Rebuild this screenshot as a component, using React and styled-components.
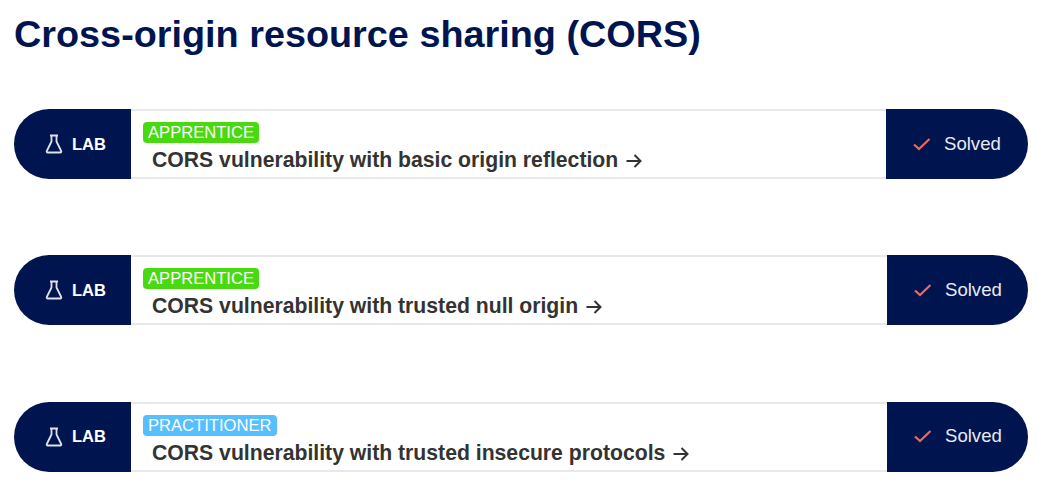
import React from "react";
import styled, { createGlobalStyle } from "styled-components";

const labs = [
  { level: "APPRENTICE", title: "vulnerability with basic origin reflection", statusWidth: 142 },
  { level: "APPRENTICE", title: "vulnerability with trusted null origin", statusWidth: 141 },
  { level: "PRACTITIONER", title: "vulnerability with trusted insecure protocols", statusWidth: 141 },
];

const FlaskIcon = () => (
  <svg width="18" height="20" viewBox="0 0 18 20" fill="none" stroke="#dfe2ea" strokeWidth="1.8">
    <path d="M5 1.5h8M6.5 1.5v6L1.8 17a1 1 0 0 0 .9 1.5h12.6a1 1 0 0 0 .9-1.5L11.5 7.5v-6" strokeLinejoin="round" />
  </svg>
);

const CheckIcon = () => (
  <svg width="18" height="14" viewBox="0 0 18 14" fill="none" stroke="#ef6a5a" strokeWidth="2.2">
    <path d="M1 7.5l5 4.5L16.5 2" />
  </svg>
);

const ArrowIcon = () => (
  <ArrowSvg width="16" height="14" viewBox="0 0 16 14" fill="none" stroke="#333332" strokeWidth="2">
    <path d="M0.5 7h14M8.5 1l6 6-6 6" />
  </ArrowSvg>
);

const App = () => {
  return (
    <Page>
      <GlobalStyle />
      <Heading>Cross-origin resource sharing (CORS)</Heading>
      <List>
        {labs.map((lab) => (
          <Row key={lab.title}>
            <LabTag>
              <FlaskIcon />
              <span>LAB</span>
            </LabTag>
            <Body>
              <Level $level={lab.level}>{lab.level}</Level>
              <Title>
                CORS {lab.title}
                <ArrowIcon />
              </Title>
            </Body>
            <Status $width={lab.statusWidth}>
              <CheckIcon />
              <span>Solved</span>
            </Status>
          </Row>
        ))}
      </List>
    </Page>
  );
};

const GlobalStyle = createGlobalStyle`
  html, body {
    margin: 0;
    background: #fff;
  }
  body {
    font-family: "Liberation Sans", Arial, sans-serif;
  }
`;

const Page = styled.div`
  width: 1038px;
  height: 491px;
  padding: 12px 10px 0 14px;
  box-sizing: border-box;
  overflow: hidden;
`;

const Heading = styled.h1`
  margin: 0;
  font-size: 37.8px;
  line-height: 44px;
  font-weight: 700;
  color: #00144f;
`;

const List = styled.div`
  display: flex;
  flex-direction: column;
  gap: 76.4px;
  margin-top: 53px;
`;

const Row = styled.div`
  display: flex;
  height: 70px;
  box-sizing: border-box;
`;

const LabTag = styled.div`
  width: 117px;
  display: flex;
  align-items: center;
  justify-content: center;
  gap: 9px;
  padding-left: 6px;
  box-sizing: border-box;
  background: #00144f;
  border-radius: 35px 0 0 35px;
  color: #fff;
  font-size: 16.5px;
  font-weight: 700;
`;

const Body = styled.div`
  flex: 1;
  border-top: 2px solid #e6e8eb;
  border-bottom: 2px solid #e6e8eb;
  padding: 11px 0 0 12px;
  box-sizing: border-box;
`;

const Level = styled.span`
  display: inline-block;
  padding: 0 5px;
  height: 21px;
  line-height: 21px;
  border-radius: 4px;
  font-size: 16.6px;
  color: #fff;
  opacity: 0.95;
  background: ${(props) => (props.$level === "PRACTITIONER" ? "#4cbcff" : "#3fd805")};
`;

const Title = styled.div`
  margin: 5px 0 0 9px;
  font-size: 21.2px;
  line-height: 24px;
  font-weight: 700;
  color: #333332;
`;

const ArrowSvg = styled.svg`
  margin-left: 8px;
  vertical-align: -1px;
`;

const Status = styled.div`
  width: ${(props) => props.$width}px;
  display: flex;
  align-items: center;
  gap: 13px;
  padding-left: 27px;
  padding-bottom: 1px;
  box-sizing: border-box;
  background: #00144f;
  border-radius: 0 35px 35px 0;
  color: #e8eaf2;
  font-size: 18.6px;
`;

export default App;
